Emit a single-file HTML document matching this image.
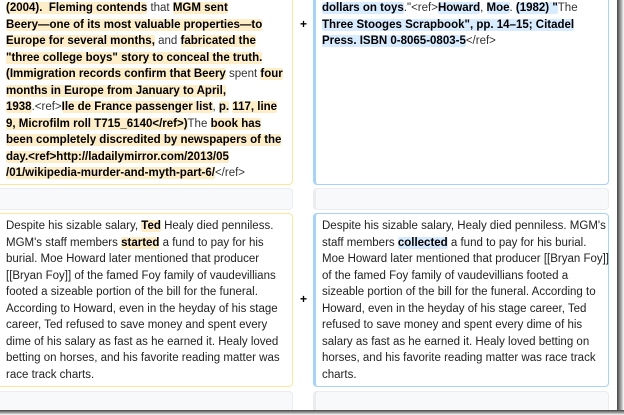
<!DOCTYPE html>
<html><head><meta charset="utf-8"><style>
body{margin:0;width:624px;height:415px;overflow:hidden;background:#fff;font-family:"Liberation Sans",Arial,sans-serif;font-size:11.5px;color:#222;position:relative}
.box{position:absolute;box-sizing:border-box;border-radius:4px}
.del{border:1px solid #ffe49c;}
.add{border:1px solid #a3d3ff;border-left:3px solid #a3d3ff;}
.gray{background:#f8f9fa;border:1px solid #eaecf0;border-radius:4px;position:absolute;box-sizing:border-box}
.t{position:absolute;line-height:16.5px;white-space:nowrap}
.d{background:#feeec8;font-weight:bold;color:#000;border-radius:2px}
.a{background:#d8ecff;font-weight:bold;color:#000;border-radius:2px}
.n{color:#333}
.plus{position:absolute;font-weight:bold;font-size:12px;color:#000}
.sh1{position:absolute;left:0;top:410px;width:624px;height:5px;background:linear-gradient(#444,#aaa 60%,#fff)}
.sh2{position:absolute;left:617px;top:0;width:7px;height:415px;background:linear-gradient(90deg,#444,#aaa 60%,#fff)}
</style></head><body>
<div class="box del" style="left:-3px;top:-10px;width:296px;height:195px"></div>
<div class="t" style="left:6px;top:0px">
<span class="d">(2004).&nbsp; Fleming contends</span> <span class="n">that</span> <span class="d">MGM sent</span><br>
<span class="d">Beery—one of its most valuable properties—to</span><br>
<span class="d">Europe for several months,</span> <span class="n">and</span> <span class="d">fabricated the</span><br>
<span class="d">"three college boys" story to conceal the truth.</span><br>
<span class="d">(Immigration records confirm that Beery</span> <span class="n">spent</span> <span class="d">four</span><br>
<span class="d">months in Europe from January to April,</span><br>
<span class="d">1938</span><span class="n">.&lt;ref&gt;</span><span class="d">Ile de France passenger list</span>, <span class="d">p.</span> <span class="d">117, line</span><br>
<span class="d">9, Microfilm roll T715_6140&lt;/ref&gt;)</span><span class="n">The</span> <span class="d">book has</span><br>
<span class="d">been completely discredited by newspapers of the</span><br>
<span class="d">day.&lt;ref&gt;http://ladailymirror.com/2013/05</span><br>
<span class="d">/01/wikipedia-murder-and-myth-part-6/</span><span class="n">&lt;/ref&gt;</span>
</div>
<div class="plus" style="left:300px;top:17px">+</div>
<div class="box add" style="left:313px;top:-10px;width:296px;height:195px"></div>
<div class="t" style="left:322px;top:0px">
<span class="a">dollars on toys</span>."<span class="n">&lt;ref&gt;</span><span class="a">Howard</span>, <span class="a">Moe</span>. <span class="a">(1982) "</span><span class="n">The</span><br>
<span class="a">Three Stooges Scrapbook", pp. 14–15; Citadel</span><br>
<span class="a">Press. ISBN 0-8065-0803-5</span><span class="n">&lt;/ref&gt;</span>
</div>
<div class="gray" style="left:-3px;top:188px;width:296px;height:22px"></div>
<div class="gray" style="left:313px;top:188px;width:296px;height:22px;border-left:3px solid #eaecf0"></div>
<div class="box del" style="left:-3px;top:213px;width:296px;height:174px"></div>
<div class="t" style="left:6px;top:218px">
Despite his sizable salary, <span class="d">Ted</span> Healy died penniless.<br>
MGM's staff members <span class="d">started</span> a fund to pay for his<br>
burial. Moe Howard later mentioned that producer<br>
[[Bryan Foy]] of the famed Foy family of vaudevillians<br>
footed a sizeable portion of the bill for the funeral.<br>
According to Howard, even in the heyday of his stage<br>
career, Ted refused to save money and spent every<br>
dime of his salary as fast as he earned it. Healy loved<br>
betting on horses, and his favorite reading matter was<br>
race track charts.
</div>
<div class="plus" style="left:300px;top:292px">+</div>
<div class="box add" style="left:313px;top:213px;width:296px;height:174px"></div>
<div class="t" style="left:322px;top:218px">
Despite his sizable salary, Healy died penniless. MGM's<br>
staff members <span class="a">collected</span> a fund to pay for his burial.<br>
Moe Howard later mentioned that producer [[Bryan Foy]]<br>
of the famed Foy family of vaudevillians footed a<br>
sizeable portion of the bill for the funeral. According to<br>
Howard, even in the heyday of his stage career, Ted<br>
refused to save money and spent every dime of his<br>
salary as fast as he earned it. Healy loved betting on<br>
horses, and his favorite reading matter was race track<br>
charts.
</div>
<div class="gray" style="left:-3px;top:391px;width:296px;height:22px"></div>
<div class="gray" style="left:313px;top:391px;width:296px;height:22px;border-left:3px solid #eaecf0"></div>
<div class="sh2"></div>
<div class="sh1"></div>
</body></html>
